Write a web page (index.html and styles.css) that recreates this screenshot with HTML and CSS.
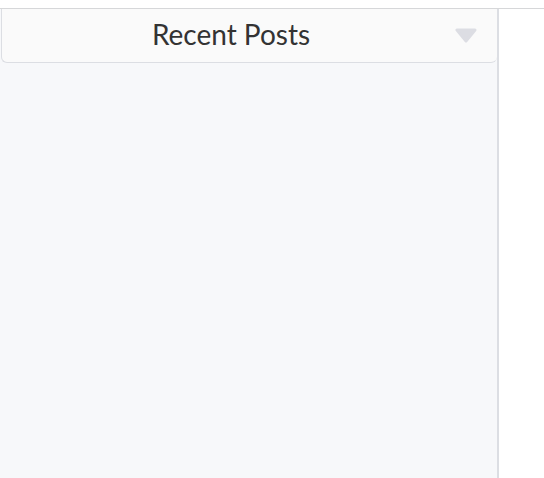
FILE: index.html
```html
<!DOCTYPE html>
<html lang="en">
<head>
    <meta charset="UTF-8">
    <meta name="viewport" content="width=device-width, initial-scale=1.0">
    <title>Recent Posts</title>
    <link rel="stylesheet" href="styles.css">
</head>
<body>
    <div class="page">
        <aside class="sidebar">
            <div class="sidebar-head">
                <h2>Recent Posts</h2>
                <svg class="caret" width="22" height="15" viewBox="0 0 22 15">
                    <path d="M2 2 L20 2 L11 13 Z" fill="#dcdde3" stroke="#dcdde3" stroke-width="3" stroke-linejoin="round"/>
                </svg>
            </div>
        </aside>
    </div>
</body>
</html>
```

FILE: styles.css
```css
* {
    margin: 0;
    padding: 0;
    box-sizing: border-box;
}

body {
    font-family: 'Lato', sans-serif;
    background: #ffffff;
    color: #333333;
}

.page {
    margin-top: 8px;
    border-top: 1px solid #d6d7d9;
    display: flex;
    height: 470px;
}

.sidebar {
    width: 499px;
    background: #f7f8fa;
    border-right: 2px solid #dcdee3;
}

.sidebar-head {
    position: relative;
    height: 54px;
    margin-left: 1px;
    padding-right: 37px;
    padding-bottom: 4px;
    background: #fafafa;
    border: 1px solid #dcdee3;
    border-top: none;
    border-right: none;
    border-radius: 0 0 6px 6px;
    display: flex;
    align-items: center;
    justify-content: center;
}

.sidebar-head h2 {
    font-size: 28px;
    font-weight: normal;
    color: #333333;
}

.caret {
    position: absolute;
    right: 20px;
    top: 19px;
}
```
